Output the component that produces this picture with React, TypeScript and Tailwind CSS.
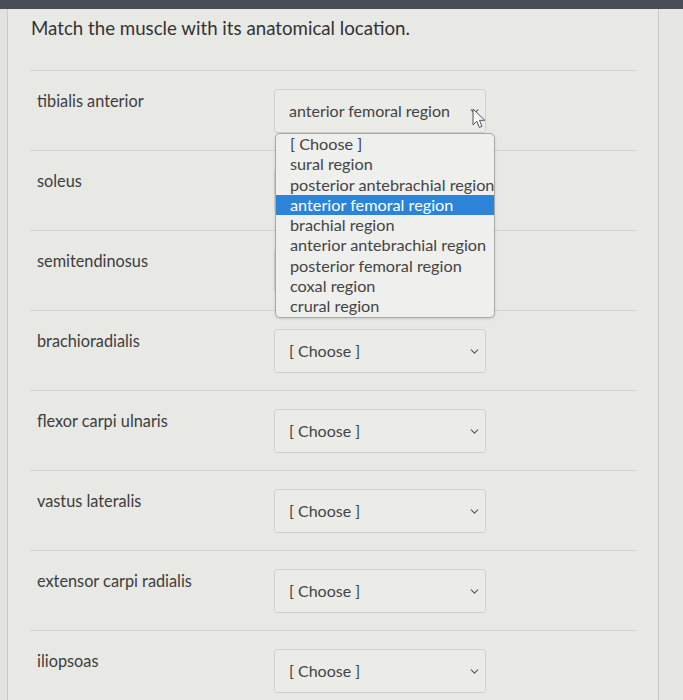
import { ChevronDown } from 'lucide-react'

const rows = [
  'tibialis anterior',
  'soleus',
  'semitendinosus',
  'brachioradialis',
  'flexor carpi ulnaris',
  'vastus lateralis',
  'extensor carpi radialis',
  'iliopsoas',
]

const options = [
  '[ Choose ]',
  'sural region',
  'posterior antebrachial region',
  'anterior femoral region',
  'brachial region',
  'anterior antebrachial region',
  'posterior femoral region',
  'coxal region',
  'crural region',
]

function Cursor() {
  return (
    <svg width="16" height="23" viewBox="0 0 16 23" className="absolute left-[472px] top-[108px]">
      <path d="M1 1 L1 17 L4.8 13.2 L7.3 19.5 L10 18.4 L7.5 12.3 L12.8 12.3 Z" fill="#fafafa" stroke="#555" strokeWidth="1" strokeLinejoin="round" />
    </svg>
  )
}

export default function App() {
  return (
    <div className="relative w-[683px] h-[700px] overflow-hidden bg-[#e4e4e1] font-['Lato',sans-serif] text-[#3a3a3a]">
      <div className="h-[9px] bg-[#4b4d56]" />
      <div className="flex h-full">
        <div className="w-[7px] bg-[#e2e2df]" />
        <div className="w-[652px] border-x border-[#c9c9c6] bg-[#e8e8e5] pl-[22px] pr-[21px]">
          <h1 className="pt-[7px] pl-[1px] text-[18.7px] leading-[24px] text-[#333]">
            Match the muscle with its anatomical location.
          </h1>
          <div className="mt-[30px]">
            {rows.map((name, i) => (
              <div key={name} className="flex h-[80px] border-t border-[#d2d2cf]">
                <div className="w-[244px] pl-[7px] pt-[20px] text-[16.3px] leading-[20px] text-[#3d3d3d]">{name}</div>
                <div className="pt-[18px]">
                  <div className="flex h-[44px] w-[212px] items-center justify-between rounded-[3px] border border-[#cfcfcc] bg-[#ebebe8] pl-[14px] pr-[4px] text-[16px] text-[#444]">
                    <span>{i === 0 ? 'anterior femoral region' : '[ Choose ]'}</span>
                    <ChevronDown size={13} strokeWidth={2} className="text-[#555]" />
                  </div>
                </div>
              </div>
            ))}
          </div>
        </div>
        <div className="flex-1 bg-[#e6e6e3]" />
      </div>

      <div className="absolute left-[275px] top-[133px] w-[220px] rounded-[5px] border border-[#a9a9a7] bg-[#efefed] text-[16.25px] leading-[20.3px] text-[#444] whitespace-nowrap shadow-sm">
        {options.map((o) => (
          <div key={o} className={o === 'anterior femoral region' ? 'bg-[#2c84d9] pl-[14px] text-white' : 'pl-[14px]'}>
            {o}
          </div>
        ))}
      </div>
      <Cursor />
    </div>
  )
}
